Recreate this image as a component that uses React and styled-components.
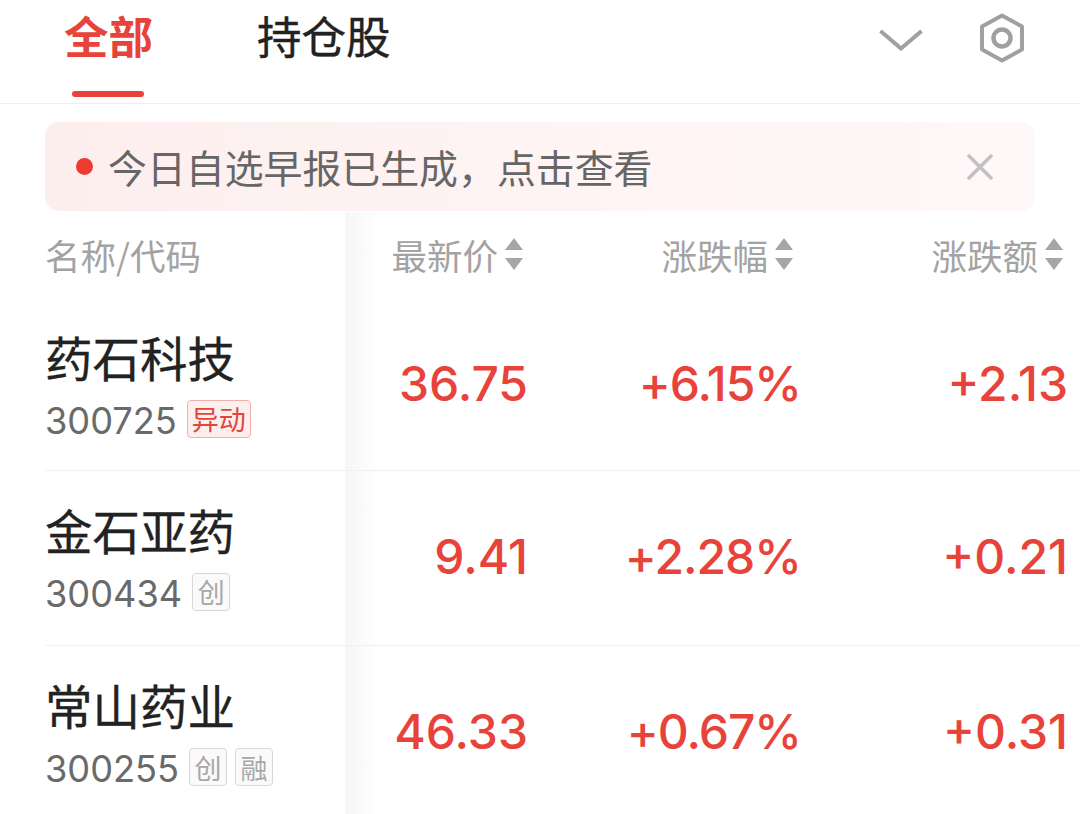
import React from 'react';
import styled, { createGlobalStyle } from 'styled-components';

const RED = '#e8433a';
const CJK = '"Noto Sans CJK SC", "Noto Sans", sans-serif';
const NUM = 'Inter, Roboto, "Noto Sans CJK SC", sans-serif';

const STOCKS = [
  { name: '药石科技', code: '300725', tags: [{ text: '异动', alert: true }], price: '36.75', pct: '+6.15%', amt: '+2.13', height: 171 },
  { name: '金石亚药', code: '300434', tags: [{ text: '创' }], price: '9.41', pct: '+2.28%', amt: '+0.21', height: 175 },
  { name: '常山药业', code: '300255', tags: [{ text: '创' }, { text: '融' }], price: '46.33', pct: '+0.67%', amt: '+0.31', height: 175 },
];

const App = () => (
  <>
    <GlobalStyle />
    <Page>
      <TabBar>
        <Tab $active>全部</Tab>
        <Tab>持仓股</Tab>
        <TabIcons>
          <svg width="44" height="26" viewBox="0 -3 44 26" fill="none" stroke="#a0a0a0" strokeWidth="4">
            <path d="M1.5 3 L22 20.5 L42.5 3" />
          </svg>
          <svg width="46" height="50" viewBox="0 0 46 50" fill="none" stroke="#a0a0a0">
            <path d="M23 2.5 L43 13.5 V36.5 L23 47.5 L3 36.5 V13.5 Z" strokeWidth="4" strokeLinejoin="round" />
            <circle cx="23" cy="25" r="8.5" strokeWidth="4.5" />
          </svg>
        </TabIcons>
      </TabBar>

      <Banner>
        <BannerDot />
        <BannerText>今日自选早报已生成，点击查看</BannerText>
        <svg width="28" height="28" viewBox="0 0 28 28" stroke="#c2c0c0" strokeWidth="3.5">
          <path d="M2 2 L26 26 M26 2 L2 26" />
        </svg>
      </Banner>

      <Table>
        <HeaderRow>
          <HeaderName>名称/代码</HeaderName>
          {['最新价', '涨跌幅', '涨跌额'].map((title) => (
            <HeaderCell key={title}>
              {title}
              <SortArrows>
                <svg width="18" height="34" viewBox="0 0 18 34" fill="#a6a6a6">
                  <path d="M9 1 L18 13 H0 Z M0 21 H18 L9 33 Z" />
                </svg>
              </SortArrows>
            </HeaderCell>
          ))}
        </HeaderRow>

        {STOCKS.map((stock, i) => (
          <StockRow key={stock.code} $height={stock.height} $last={i === STOCKS.length - 1}>
            <NameCell>
              <StockName>{stock.name}</StockName>
              <CodeLine>
                <Code>{stock.code}</Code>
                {stock.tags.map((tag) => (
                  <Tag key={tag.text} $alert={tag.alert}>{tag.text}</Tag>
                ))}
              </CodeLine>
            </NameCell>
            <Value>{stock.price}</Value>
            <Value $tight>{stock.pct}</Value>
            <Value>{stock.amt}</Value>
          </StockRow>
        ))}
      </Table>
    </Page>
  </>
);

const GlobalStyle = createGlobalStyle`
  html, body {
    margin: 0;
    padding: 0;
    background: #fff;
    overflow: hidden;
  }
`;

const Page = styled.div`
  width: 1080px;
  height: 814px;
  overflow: hidden;
  background: #fff;
  font-family: ${CJK};
`;

const TabBar = styled.div`
  display: flex;
  height: 103px;
  padding-left: 64px;
  gap: 104px;
  border-bottom: 1px solid #efefef;
`;

const Tab = styled.div`
  position: relative;
  font-size: 44.5px;
  line-height: 70px;
  font-weight: ${(p) => (p.$active ? 700 : 400)};
  color: ${(p) => (p.$active ? RED : '#222')};
  -webkit-text-stroke: ${(p) => (p.$active ? 0 : '0.4px')};

  &::after {
    content: '';
    display: ${(p) => (p.$active ? 'block' : 'none')};
    position: absolute;
    left: 8px;
    right: 9px;
    top: 91px;
    height: 6px;
    border-radius: 3px;
    background: ${RED};
  }
`;

const TabIcons = styled.div`
  display: flex;
  align-items: center;
  gap: 56px;
  margin-left: auto;
  padding: 0 55px 28px 0;
`;

const Banner = styled.div`
  display: flex;
  align-items: center;
  height: 89px;
  margin: 18px 45px 0;
  padding: 0 41px 0 31px;
  border-radius: 14px;
  background: linear-gradient(90deg, #fdeeee 0%, #fef4f3 50%, #fff8f8 100%);
`;

const BannerDot = styled.span`
  width: 17px;
  height: 17px;
  border-radius: 50%;
  background: #ee3b32;
`;

const BannerText = styled.span`
  flex: 1;
  margin-left: 15px;
  font-size: 38.9px;
  line-height: 1;
  color: #666;
`;

const Table = styled.div`
  position: relative;
  margin-top: 1px;

  /* shadow cast by the frozen name column */
  &::after {
    content: '';
    position: absolute;
    left: 345px;
    top: 0;
    bottom: 0;
    width: 36px;
    background: linear-gradient(90deg, #f6f6f6, #fff);
    pointer-events: none;
  }
`;

const HeaderRow = styled.div`
  display: grid;
  grid-template-columns: 209px 271px 270px 270px;
  align-items: center;
  height: 84px;
  margin-bottom: 4px;
  padding-left: 45px;
  font-size: 35.5px;
  color: #a3a3a3;
`;

const HeaderName = styled.div`
  white-space: nowrap;
`;

const HeaderCell = styled.div`
  position: relative;
  z-index: 1;
  display: flex;
  align-items: center;
  justify-content: flex-end;
  gap: 7px;
  padding-right: 2px;
  white-space: nowrap;
`;

const SortArrows = styled.span`
  display: flex;
`;

const StockRow = styled.div`
  position: relative;
  z-index: 1;
  display: grid;
  grid-template-columns: 300px 183px 271px 269px;
  align-items: center;
  height: ${(p) => p.$height}px;
  margin-left: 45px;
  box-sizing: border-box;
  border-bottom: ${(p) => (p.$last ? 'none' : '1px solid #f0f0f0')};
`;

const NameCell = styled.div`
  display: flex;
  flex-direction: column;
  gap: 13px;
  padding-bottom: 6px;
`;

const StockName = styled.div`
  font-size: 47.5px;
  line-height: 60px;
  color: #222;
  white-space: nowrap;
  -webkit-text-stroke: 0.3px;
`;

const CodeLine = styled.div`
  display: flex;
  align-items: center;
  gap: 8px;
  height: 38px;
`;

const Code = styled.span`
  margin-right: 2px;
  padding-top: 4px;
  font-family: ${NUM};
  font-size: 36.2px;
  color: #6a6a6a;
`;

const Tag = styled.span`
  display: flex;
  align-items: center;
  justify-content: center;
  box-sizing: border-box;
  height: 38px;
  min-width: 38px;
  padding: 0 4px;
  border-radius: 4px;
  font-size: 27px;
  line-height: 1;
  border: 1px solid ${(p) => (p.$alert ? '#f3b0aa' : '#d8d8d8')};
  background: ${(p) => (p.$alert ? '#fdeeee' : '#fafafa')};
  color: ${(p) => (p.$alert ? '#e2453c' : '#a8a8a8')};
`;

const Value = styled.div`
  padding-bottom: 4px;
  text-align: right;
  font-family: ${NUM};
  font-size: 48px;
  font-weight: 500;
  color: ${RED};
  letter-spacing: ${(p) => (p.$tight ? '-1px' : 0)};
  margin-right: ${(p) => (p.$tight ? '-2px' : 0)};
`;

export default App;
